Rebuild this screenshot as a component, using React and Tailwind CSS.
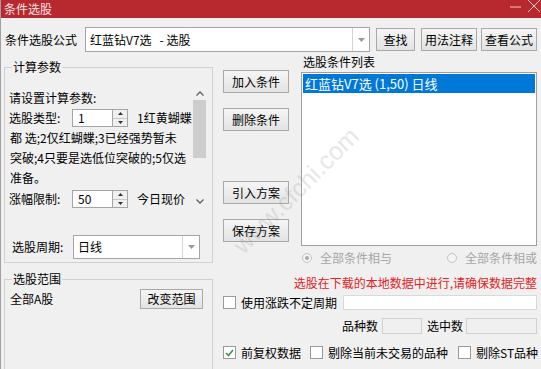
import React from "react";

const Btn = ({ children, className = "" }) => (
  <div
    className={`flex items-center justify-center border border-[#a9a9a9] bg-gradient-to-b from-[#f5f5f5] to-[#e3e3e3] leading-none text-black ${className}`}
  >
    {children}
  </div>
);

const Spinner = ({ value }) => (
  <div className="flex h-[18px]">
    <div className="flex w-[41px] items-center border border-[#a5a5a5] bg-white pl-[5px] leading-none">{value}</div>
    <div className="flex w-[15px] flex-col border border-l-0 border-[#a5a5a5] bg-[#f0f0f0]">
      <div className="flex flex-1 items-center justify-center border-b border-[#c8c8c8]">
        <svg width="5" height="3" viewBox="0 0 5 3"><path d="M0 3 L2.5 0 L5 3 Z" fill="#333" /></svg>
      </div>
      <div className="flex flex-1 items-center justify-center">
        <svg width="5" height="3" viewBox="0 0 5 3"><path d="M0 0 L2.5 3 L5 0 Z" fill="#333" /></svg>
      </div>
    </div>
  </div>
);

const Combo = ({ text, className = "" }) => (
  <div className={`flex border border-[#a5a5a5] bg-white ${className}`}>
    <div className="flex flex-1 items-center pl-[4px] leading-none">{text}</div>
    <div className="flex w-[17px] items-center justify-center border-l border-[#d4d4d4]">
      <svg width="7" height="4" viewBox="0 0 7 4"><path d="M0 0 L3.5 4 L7 0 Z" fill="#9a9a9a" /></svg>
    </div>
  </div>
);

const Check = ({ checked }) => (
  <div className="flex h-[13px] w-[13px] shrink-0 items-center justify-center border border-[#9a9a9a] bg-white">
    {checked && (
      <svg width="9" height="8" viewBox="0 0 9 8">
        <path d="M1 4 L3.5 6.5 L8 1" fill="none" stroke="#3f8f52" strokeWidth="1.6" />
      </svg>
    )}
  </div>
);

const Radio = ({ on }) => (
  <div className="flex h-[10px] w-[10px] shrink-0 items-center justify-center rounded-full border border-[#c4c4c4] bg-[#f4f4f4]">
    {on && <div className="h-[4px] w-[4px] rounded-full bg-[#a8a8a8]" />}
  </div>
);

export default function App() {
  return (
    <div className="relative flex h-[369px] w-[541px] flex-col overflow-hidden whitespace-nowrap border-l border-[#a0a0a0] bg-[#f0f0f0] font-['Noto_Sans_CJK_SC',sans-serif] text-[12px] text-black">
      {/* title bar */}
      <div className="flex h-[18px] shrink-0 items-start justify-between bg-[#b8292f]">
        <span className="ml-[3px] mt-[2px] leading-[14px] text-[#f6e4e4]">条件选股</span>
        <div className="flex items-start">
          <svg width="14" height="12" viewBox="0 0 14 12" className="mt-[1px]">
            <path d="M1 6 H12" stroke="#f1c9c9" strokeWidth="1" />
          </svg>
          <svg width="14" height="13" viewBox="0 0 14 13" className="ml-[4px]">
            <path d="M1 0 L13 12 M13 0 L1 12" stroke="#f1c9c9" strokeWidth="1" />
          </svg>
        </div>
      </div>

      {/* formula row */}
      <div className="mt-[9px] flex h-[25px] shrink-0 items-center">
        <span className="ml-[4px] w-[72px] leading-none">条件选股公式</span>
        <Combo text="红蓝钻V7选   - 选股" className="ml-[8px] h-[25px] w-[285px] whitespace-pre" />
        <Btn className="ml-[6px] h-[23px] w-[39px]">查找</Btn>
        <Btn className="ml-[6px] h-[23px] w-[56px]">用法注释</Btn>
        <Btn className="ml-[4px] h-[23px] w-[56px]">查看公式</Btn>
      </div>

      {/* main */}
      <div className="mt-[3px] flex flex-1">
        {/* left column */}
        <div className="ml-[3px] flex w-[209px] shrink-0 flex-col">
          <fieldset className="mt-[5px] h-[203px] border border-[#d0d0d0]">
            <legend className="ml-[7px] px-[1px] leading-[14px]">计算参数</legend>
            <div className="mt-[12px] flex">
              <div className="h-[122px] w-[187px] overflow-hidden pl-[4px] pt-[2px] leading-[20px]">
                <div className="h-[20px]">请设置计算参数:</div>
                <div className="flex h-[20px] items-center">
                  <span className="w-[63px]">选股类型:</span>
                  <Spinner value="1" />
                  <span className="ml-[9px]">1红黄蝴蝶</span>
                </div>
                <div className="h-[20px] whitespace-pre pl-[1px]">都 选;2仅红蝴蝶;3已经强势暂未</div>
                <div className="h-[20px] pl-[1px]">突破;4只要是选低位突破的;5仅选</div>
                <div className="h-[20px] pl-[1px]">准备。</div>
                <div className="flex h-[22px] items-center">
                  <span className="w-[63px]">涨幅限制:</span>
                  <Spinner value="50" />
                  <span className="ml-[9px]">今日现价</span>
                </div>
              </div>
              <div className="flex h-[122px] w-[15px] flex-col">
                <div className="flex h-[14px] items-center justify-center">
                  <svg width="8" height="5" viewBox="0 0 8 5"><path d="M0.5 4.5 L4 1 L7.5 4.5" fill="none" stroke="#606060" strokeWidth="1.3" /></svg>
                </div>
                <div className="mx-[1px] h-[58px] bg-[#cdcdcd]" />
                <div className="flex-1" />
                <div className="flex h-[14px] items-center justify-center">
                  <svg width="8" height="5" viewBox="0 0 8 5"><path d="M0.5 0.5 L4 4 L7.5 0.5" fill="none" stroke="#606060" strokeWidth="1.3" /></svg>
                </div>
              </div>
            </div>
            <div className="mt-[27px] flex h-[24px] items-center">
              <span className="ml-[7px] w-[61px] leading-none">选股周期:</span>
              <Combo text="日线" className="h-[24px] w-[127px]" />
            </div>
          </fieldset>

          <fieldset className="mt-[9px] h-[120px] border border-[#d0d0d0]">
            <legend className="ml-[7px] px-[1px] leading-[14px]">选股范围</legend>
            <div className="mt-[3px] flex h-[20px] items-center">
              <span className="ml-[5px] leading-none">全部A股</span>
              <Btn className="ml-auto mr-[9px] h-[20px] w-[63px]">改变范围</Btn>
            </div>
          </fieldset>
        </div>

        {/* right part */}
        <div className="ml-[10px] flex w-[314px] shrink-0 flex-col">
          <div className="flex">
            <div className="flex w-[66px] flex-col">
              <Btn className="mt-[15px] h-[23px]">加入条件</Btn>
              <Btn className="mt-[15px] h-[23px]">删除条件</Btn>
              <Btn className="mt-[50px] h-[23px]">引入方案</Btn>
              <Btn className="mt-[15px] h-[23px]">保存方案</Btn>
            </div>
            <div className="ml-[12px] flex w-[236px] flex-col">
              <div className="ml-[2px] h-[14px] leading-[14px]">选股条件列表</div>
              <div className="mt-[3px] h-[174px] border border-[#a0a0a0] bg-white p-[1px]">
                <div className="flex h-[19px] items-center bg-[#0078d7] pl-[2px] text-[13px] leading-none text-white">
                  红蓝钻V7选 (1,50) 日线
                </div>
              </div>
            </div>
          </div>

          <div className="mt-[4px] flex h-[16px] items-center text-[#a6a6a6]">
            <div className="ml-[79px] flex items-center">
              <Radio on />
              <span className="ml-[8px] leading-none">全部条件相与</span>
            </div>
            <div className="ml-auto flex items-center">
              <Radio />
              <span className="ml-[8px] leading-none">全部条件相或</span>
            </div>
          </div>

          <div className="mt-[9px] flex h-[16px] items-center justify-end leading-none text-[#e3211f]">
            选股在下载的本地数据中进行,请确保数据完整
          </div>

          <div className="mt-[4px] flex h-[15px] items-center">
            <Check />
            <span className="ml-[5px] leading-none">使用涨跌不定周期</span>
            <div className="ml-auto h-[15px] w-[194px] border border-[#d9d9d9] bg-white" />
          </div>

          <div className="mt-[8px] flex h-[16px] items-center justify-end">
            <span className="leading-none">品种数</span>
            <div className="ml-[4px] h-[16px] w-[40px] border border-[#d0d0d0] bg-[#f0f0f0]" />
            <span className="ml-[5px] leading-none">选中数</span>
            <div className="ml-[3px] h-[16px] w-[71px] border border-[#d0d0d0] bg-[#f0f0f0]" />
          </div>

          <div className="mt-[11px] flex h-[15px] items-center">
            <Check checked />
            <span className="ml-[5px] shrink-0 leading-none">前复权数据</span>
            <div className="ml-[9px]"><Check /></div>
            <span className="ml-[5px] shrink-0 leading-none">剔除当前未交易的品种</span>
            <div className="ml-[10px]"><Check /></div>
            <span className="ml-[5px] shrink-0 leading-none">剔除ST品种</span>
          </div>
        </div>
      </div>

      {/* watermark */}
      <div className="pointer-events-none absolute left-[200px] top-[178px] w-[190px] -rotate-45 text-center font-['Liberation_Sans',sans-serif] text-[25px] leading-none text-[#8a8a8a] opacity-20">
        www.cfchi.com
      </div>
    </div>
  );
}
